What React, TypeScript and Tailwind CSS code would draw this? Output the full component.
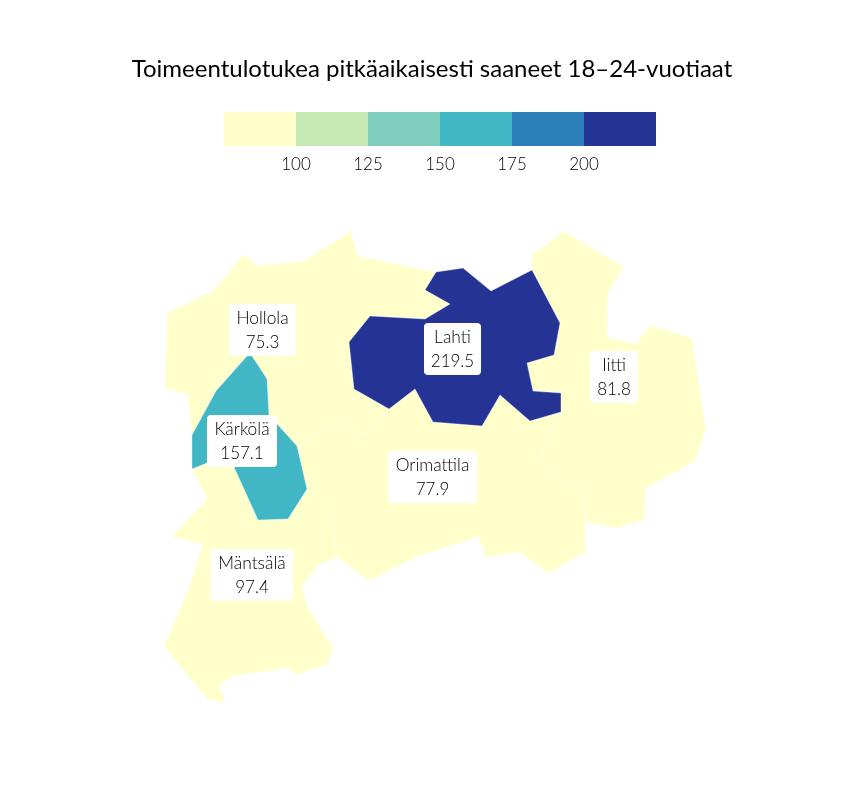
import React from 'react';

const LEGEND_COLORS = ['bg-[#ffffcc]', 'bg-[#c7e9b4]', 'bg-[#7fcdbb]', 'bg-[#41b6c4]', 'bg-[#2c7fb8]', 'bg-[#253494]'];
const LEGEND_TICKS = ['100', '125', '150', '175', '200'];

// municipality outlines in page coordinates
const AREAS = [
  {
    name: 'Hollola',
    fill: '#ffffcc',
    points:
      '165,388 167,313 213,291 244,254 257,266 304,261 351,231 358,256 436,272 425,290 450,304 425,319 370,316 349,342 354,389 389,409 369,436 336,423 297,446 269,415 267,379 252,356 247,356 216,391 192,435 188,395',
  },
  {
    name: 'Mäntsälä',
    fill: '#ffffcc',
    points:
      '192,469 207,463 234,467 258,520 288,519 307,489 331,513 337,557 318,565 302,587 307,606 333,648 327,664 297,675 288,668 233,676 219,686 226,703 207,699 164,646 190,585 203,544 172,537 207,499',
  },
  {
    name: 'Orimattila',
    fill: '#ffffcc',
    points:
      '297,446 336,423 369,436 389,409 415,389 433,422 482,426 500,395 530,421 561,412 538,464 583,490 586,552 549,573 519,552 486,558 479,537 450,546 418,556 369,581 337,557 331,513 307,489',
  },
  {
    name: 'Iitti',
    fill: '#ffffcc',
    points:
      '532,270 532,255 564,231 624,267 608,293 607,337 636,344 650,325 692,338 706,431 694,462 646,488 644,520 617,528 585,522 583,490 538,464 561,412 561,393 533,391 527,363 554,355 560,323',
  },
  {
    name: 'Kärkölä',
    fill: '#41b6c4',
    points: '192,435 216,391 247,356 252,356 267,379 269,415 297,446 307,489 288,519 258,520 234,467 207,463 192,469',
  },
  {
    name: 'Lahti',
    fill: '#253494',
    points:
      '436,272 463,268 491,291 532,270 560,323 554,355 527,363 533,391 561,393 561,412 530,421 500,395 482,426 433,422 415,389 389,409 354,389 349,342 370,316 425,319 450,304 425,290',
  },
];

const LABELS = [
  { name: 'Hollola', value: '75.3', pos: 'left-[229px] top-[104px] w-[67px]' },
  { name: 'Lahti', value: '219.5', pos: 'left-[424px] top-[123px] w-[57px]' },
  { name: 'Iitti', value: '81.8', pos: 'left-[590px] top-[151px] w-[48px]' },
  { name: 'Kärkölä', value: '157.1', pos: 'left-[207px] top-[215px] w-[70px]' },
  { name: 'Orimattila', value: '77.9', pos: 'left-[388px] top-[251px] w-[89px]' },
  { name: 'Mäntsälä', value: '97.4', pos: 'left-[211px] top-[349px] w-[82px]' },
];

const App: React.FC = () => {
  return (
    <div className="w-[864px] h-[792px] bg-white overflow-hidden flex flex-col font-['Lato',sans-serif] text-black">
      <h1 className="h-[112px] pt-[50px] text-center text-[24px] leading-[36px] font-normal [will-change:transform]">
        Toimeentulotukea pitkäaikaisesti saaneet 18–24-vuotiaat
      </h1>

      {/* Legend */}
      <div className="ml-[224px] w-[432px]">
        <div className="flex h-[34px]">
          {LEGEND_COLORS.map((color) => (
            <div key={color} className={`w-[72px] ${color}`} />
          ))}
        </div>
        <div className="flex pl-[36px] pt-[6px] text-[17px] leading-[24px] font-light [will-change:transform]">
          {LEGEND_TICKS.map((tick) => (
            <div key={tick} className="w-[72px] text-center">
              {tick}
            </div>
          ))}
        </div>
      </div>

      {/* Map */}
      <div className="relative w-[864px] h-[592px] mt-[24px]">
        <svg width="864" height="592" viewBox="0 200 864 592" className="block">
          {AREAS.map((area) => (
            <polygon key={area.name} points={area.points} fill={area.fill} stroke="#ffffff" strokeWidth="0.5" strokeOpacity="0.7" />
          ))}
        </svg>
        {LABELS.map((label) => (
          <div
            key={label.name}
            className={`absolute ${label.pos} bg-white rounded-[4px] py-[2px] text-center text-[17px] leading-[24px] font-light [will-change:transform]`}
          >
            <div className="text-[17.4px]">{label.name}</div>
            <div>{label.value}</div>
          </div>
        ))}
      </div>
    </div>
  );
};

export default App;
